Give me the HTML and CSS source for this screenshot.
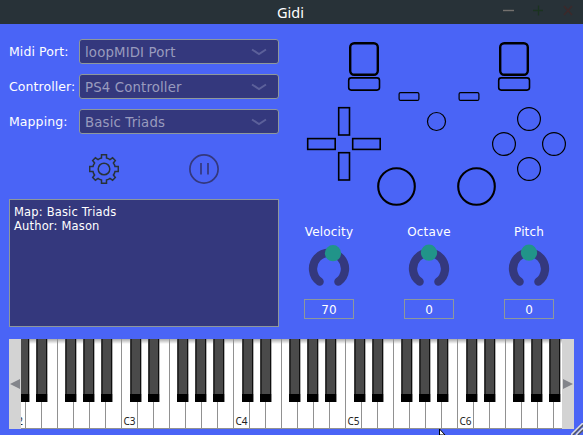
FILE: index.html
```html
<!DOCTYPE html>
<html lang="en">
<head>
<meta charset="utf-8">
<title>Gidi</title>
<link rel="stylesheet" href="styles.css">
</head>
<body>
<header class="titlebar">
  <h1 class="title">Gidi</h1>
  <svg class="window-buttons" width="80" height="24" viewBox="0 0 80 24">
    <path d="M0 10.5H11" stroke="#74716e" stroke-width="1.4"/>
    <path d="M30 10.5H40M35.5 5.5V15.5" stroke="#1b3320" stroke-width="1.3"/>
    <path d="M61 6L69 15M69 6L61 15" stroke="#3b292b" stroke-width="1.8"/>
  </svg>
</header>
<main class="panel">
  <section class="settings">
    <div class="field"><span class="label">Midi Port:</span><div class="combo"><span>loopMIDI Port</span><svg width="16" height="8" viewBox="0 0 16 8"><path d="M1 1.5L8 6L15 1.5"/></svg></div></div>
    <div class="field"><span class="label">Controller:</span><div class="combo"><span>PS4 Controller</span><svg width="16" height="8" viewBox="0 0 16 8"><path d="M1 1.5L8 6L15 1.5"/></svg></div></div>
    <div class="field"><span class="label">Mapping:</span><div class="combo"><span>Basic Triads</span><svg width="16" height="8" viewBox="0 0 16 8"><path d="M1 1.5L8 6L15 1.5"/></svg></div></div>
    <div class="actions">
      <svg width="30" height="30" viewBox="-15 -15 30 30" fill="none" stroke="#283238" stroke-width="1.5">
        <circle r="5.8"/>
        <path d="M-2.5 -14.3H2.5V-11Q4.5 -10.6 6 -9.4L8.6 -11.2L11.3 -8.5L9.4 -6Q10.6 -4.5 11 -2.5H14.3V2.5H11Q10.6 4.5 9.4 6L11.3 8.5L8.6 11.2L6 9.4Q4.5 10.6 2.5 11V14.3H-2.5V11Q-4.5 10.6 -6 9.4L-8.6 11.2L-11.3 8.5L-9.4 6Q-10.6 4.5 -11 2.5H-14.3V-2.5H-11Q-10.6 -4.5 -9.4 -6L-11.3 -8.5L-8.6 -11.2L-6 -9.4Q-4.5 -10.6 -2.5 -11Z"/>
      </svg>
      <svg width="30" height="30" viewBox="0 0 30 30" fill="none" stroke="#34387d" stroke-width="1.7">
        <circle cx="15" cy="15" r="14.1"/>
        <path d="M12 9V20.5M19 9V20.5"/>
      </svg>
    </div>
    <div class="info">Map: Basic Triads<br>Author: Mason</div>
  </section>
  <section class="controls">
    <svg class="gamepad" width="280" height="186" viewBox="298 24 280 186" fill="none" stroke="#000">
      <g stroke-width="2.4">
        <rect x="350.2" y="43.2" width="27.6" height="31.6" rx="4"/>
        <rect x="500.2" y="43.2" width="27.6" height="31.6" rx="4"/>
      </g>
      <g stroke-width="2.1">
        <circle cx="396.5" cy="186.5" r="18.3"/>
        <circle cx="476.5" cy="186.5" r="18.3"/>
      </g>
      <g stroke-width="1.6">
        <rect x="348.7" y="77.9" width="30.8" height="12.2" rx="2.5"/>
        <rect x="498.7" y="77.9" width="30.8" height="12.2" rx="2.5"/>
        <rect x="338.7" y="107.7" width="10.8" height="27.3"/>
        <rect x="338.7" y="152.7" width="10.8" height="27.3"/>
        <rect x="307.7" y="138.6" width="27.5" height="10.8"/>
        <rect x="352.7" y="138.6" width="27.5" height="10.8"/>
      </g>
      <g stroke-width="1.2">
        <rect x="399.1" y="92.6" width="19.8" height="7.8" rx="1.5"/>
        <rect x="459.1" y="92.6" width="19.8" height="7.8" rx="1.5"/>
        <circle cx="436.5" cy="121.5" r="9"/>
        <circle cx="529" cy="119" r="11.4"/>
        <circle cx="504" cy="144" r="11.4"/>
        <circle cx="554" cy="144" r="11.4"/>
        <circle cx="529" cy="169" r="11.4"/>
      </g>
    </svg>
    <div class="knobs">
      <div class="knob"><span class="caption">Velocity</span><svg width="50" height="46" viewBox="0 0 50 46"><path class="track" d="M15.6 37.7A16 16 0 1 1 34.4 37.7"/><circle class="thumb" cx="29" cy="9.2" r="8.1"/></svg><span class="value">70</span></div>
      <div class="knob"><span class="caption">Octave</span><svg width="50" height="46" viewBox="0 0 50 46"><path class="track" d="M15.6 37.7A16 16 0 1 1 34.4 37.7"/><circle class="thumb" cx="25" cy="8.7" r="8.1"/></svg><span class="value">0</span></div>
      <div class="knob"><span class="caption">Pitch</span><svg width="50" height="46" viewBox="0 0 50 46"><path class="track" d="M15.6 37.7A16 16 0 1 1 34.4 37.7"/><circle class="thumb" cx="25" cy="8.7" r="8.1"/></svg><span class="value">0</span></div>
    </div>
  </section>
</main>
<footer class="keyboard">
  <div class="scroll"><svg width="12" height="12" viewBox="0 0 12 12"><path d="M1 6L11 1V11Z"/></svg></div>
  <svg class="keys" width="541" height="90" viewBox="21 0 541 90">
    <defs>
      <linearGradient id="shade" x1="0" y1="0" x2="0" y2="1"><stop offset="0" stop-color="#000" stop-opacity=".33"/><stop offset="1" stop-color="#000" stop-opacity="0"/></linearGradient>
      <g id="black"><rect width="11.5" height="63" fill="#666"/><rect x=".6" width="10.3" height="63"/><rect x="1.5" width="8.6" height="55" fill="#4a4a4a"/><rect y="55" width="11.2" height="8"/></g>
      <g id="octave">
        <path d="M.5 0V90M16.5 0V90M32.5 0V90M48.5 0V90M64.5 0V90M80.5 0V90M96.5 0V90" stroke="#919191"/>
        <use href="#black" x="9"/><use href="#black" x="27"/><use href="#black" x="56"/><use href="#black" x="74"/><use href="#black" x="92"/>
      </g>
    </defs>
    <rect x="21" width="541" height="90" fill="#fff"/>
    <rect x="21" width="541" height="5" fill="url(#shade)"/>
    <use href="#octave" x="9"/><use href="#octave" x="121"/><use href="#octave" x="233"/><use href="#octave" x="345"/><use href="#octave" x="457"/>
    <path d="M21 89.5H562" stroke="#919191"/>
    <g class="notes"><text x="11" y="86">C2</text><text x="123.5" y="86">C3</text><text x="235.5" y="86">C4</text><text x="347.5" y="86">C5</text><text x="459.5" y="86">C6</text></g>
  </svg>
  <div class="scroll"><svg width="12" height="12" viewBox="0 0 12 12"><path d="M11 6L1 1V11Z"/></svg></div>
</footer>
<svg class="resizer" width="12" height="12" viewBox="0 0 12 12"><path d="M0 12L12 0M5 12L12 5" stroke="#ddd" stroke-width="1.6"/><path d="M2 12L12 2M7 12L12 7" stroke="#555" stroke-width="1.3"/></svg>
<svg class="cursor" width="8" height="6" viewBox="0 0 8 6"><path d="M.5 0V6H6Z" fill="#fff" stroke="#000"/></svg>
</body>
</html>
```
FILE: styles.css
```css
* { box-sizing: border-box; }
body {
  margin: 0;
  width: 583px;
  height: 435px;
  overflow: hidden;
  position: relative;
  background: #4a64f6;
  color: #fff;
  font-family: "DejaVu Sans", sans-serif;
  font-size: 12px;
}
svg { display: block; flex: none; }
.titlebar {
  height: 24px;
  padding-left: 78px;
  display: flex;
  align-items: center;
  background: #283238;
}
.title {
  flex: 1;
  margin: 0;
  text-align: center;
  font: 400 14.5px/24px "Noto Sans", sans-serif;
}
.panel { display: flex; height: 315px; }
.settings { width: 279px; padding: 15px 0 0 9px; }
.field {
  display: flex;
  align-items: center;
  height: 25px;
  margin-bottom: 10px;
}
.label { width: 70px; font-size: 12.5px; letter-spacing: .08px; white-space: nowrap; }
.combo {
  width: 200px;
  height: 25px;
  padding: 1px 11px 0 5px;
  display: flex;
  align-items: center;
  justify-content: space-between;
  border: 1px solid #8e989b;
  border-radius: 3px;
  background: #34387d;
  color: #999bbe;
  font-size: 13.3px;
  letter-spacing: .15px;
}
.combo path { fill: none; stroke: #5c609a; stroke-width: 2; }
.actions {
  display: flex;
  gap: 70px;
  padding: 10px 0 15px 80px;
}
.info {
  width: 270px;
  height: 128px;
  padding: 5px 4px;
  border: 1px solid #8e989b;
  background: #34387d;
  font-size: 11.5px;
  letter-spacing: .17px;
  line-height: 14px;
}
.controls { padding-left: 19px; }
.knobs { display: flex; gap: 50px; padding: 15px 0 0 6px; }
.knob {
  width: 50px;
  display: flex;
  flex-direction: column;
  align-items: center;
}
.caption { height: 19px; line-height: 15px; letter-spacing: .15px; white-space: nowrap; }
.track {
  fill: none;
  stroke: #34387d;
  stroke-width: 8.3;
  stroke-linecap: round;
}
.thumb { fill: #219489; }
.value {
  width: 50px;
  height: 20px;
  margin-top: 9px;
  border: 1px solid #8e989b;
  text-align: center;
  line-height: 20px;
}
.keyboard { display: flex; width: 565px; height: 90px; margin-left: 9px; }
.scroll {
  width: 12px;
  display: flex;
  align-items: center;
  background: #d3d3d3;
}
.scroll path { fill: #83858b; }
.notes { font: 10px "Noto Sans", sans-serif; fill: #222; }
.resizer { position: absolute; right: 0; bottom: 0; }
.cursor { position: absolute; left: 439px; bottom: 0; }
```
